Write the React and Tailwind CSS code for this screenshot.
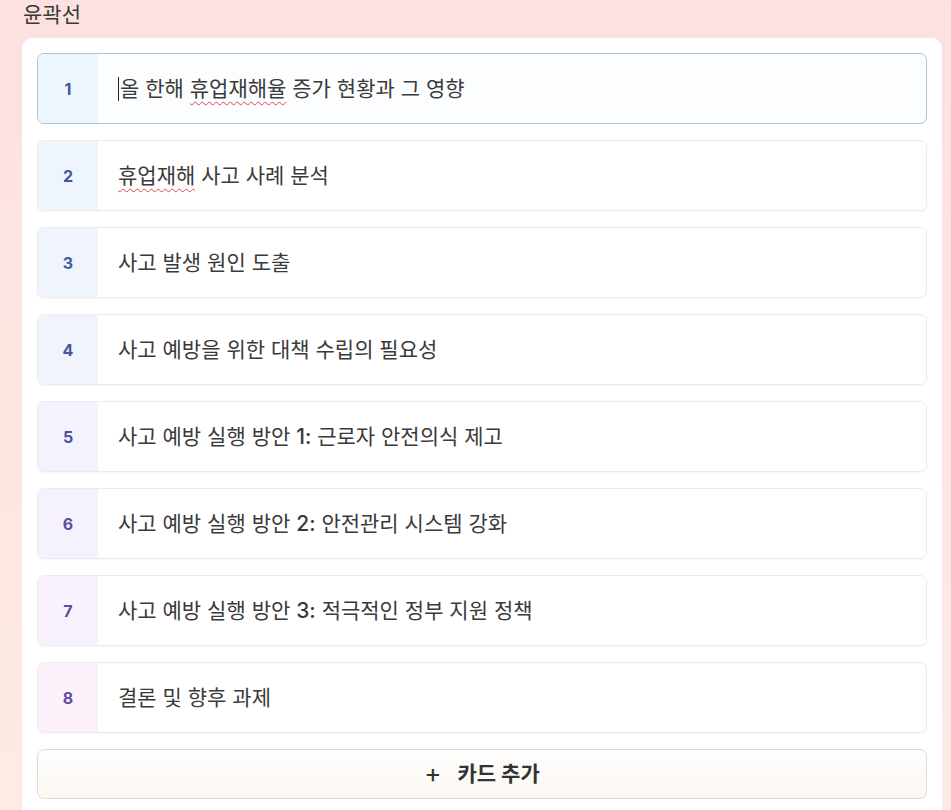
import React from "react";

const items = [
  { n: 1, numBg: "bg-[#edf6fd]", numColor: "text-[#3e5a9c]" },
  { n: 2, numBg: "bg-[#eef5fd]", numColor: "text-[#3f599c]" },
  { n: 3, numBg: "bg-[#f0f4fd]", numColor: "text-[#43589d]" },
  { n: 4, numBg: "bg-[#f1f3fd]", numColor: "text-[#47569e]" },
  { n: 5, numBg: "bg-[#f4f2fd]", numColor: "text-[#4d539f]" },
  { n: 6, numBg: "bg-[#f6f2fd]", numColor: "text-[#55509f]" },
  { n: 7, numBg: "bg-[#f9f2fc]", numColor: "text-[#5d4ea0]" },
  { n: 8, numBg: "bg-[#fcf1fb]", numColor: "text-[#654ca0]" },
];

const Wavy = ({ children }) => (
  <span className="underline decoration-wavy decoration-[#e0464b] decoration-1 underline-offset-[5px]">
    {children}
  </span>
);

const Num = ({ children }) => <span className="font-medium">{children}</span>;

const texts = [
  <>
    <span className="inline-block w-px h-[24px] bg-[#222] align-middle mr-px -mt-[2px]"></span>
    올 한해 <Wavy>휴업재해율</Wavy> 증가 현황과 그 영향
  </>,
  <>
    <Wavy>휴업재해</Wavy> 사고 사례 분석
  </>,
  <>사고 발생 원인 도출</>,
  <>사고 예방을 위한 대책 수립의 필요성</>,
  <>사고 예방 실행 방안 <Num>1:</Num> 근로자 안전의식 제고</>,
  <>사고 예방 실행 방안 <Num>2:</Num> 안전관리 시스템 강화</>,
  <>사고 예방 실행 방안 <Num>3:</Num> 적극적인 정부 지원 정책</>,
  <>결론 및 향후 과제</>,
];

export default function App() {
  return (
    <div
      className="w-[951px] h-[810px] overflow-hidden bg-gradient-to-b from-[#fde0e0] to-[#fdebe4] text-[#3a3a3a]"
      style={{ fontFamily: '"Inter", "Noto Sans CJK KR", "Noto Sans", sans-serif' }}
    >
      <div className="pl-[23px] pt-[2px] h-[38px] text-[21px] leading-[26px] text-[#3a3a3a]">
        윤곽선
      </div>
      <div className="ml-[22px] w-[920px] h-[800px] bg-white rounded-t-[10px] px-[15px] pt-[15px] flex flex-col gap-[16px]">
        {items.map((it, i) => (
          <div
            key={it.n}
            className={
              "flex h-[71px] rounded-[7px] border overflow-hidden " +
              (i === 0
                ? "border-[#a8c3d3] bg-[#fbfdff]"
                : "border-[#ececec] bg-white shadow-[0_1px_2px_rgba(0,0,0,0.04)]")
            }
          >
            <div
              className={
                "w-[60px] shrink-0 flex items-center justify-center text-[16px] font-bold " +
                it.numBg +
                " " +
                it.numColor
              }
            >
              {it.n}
            </div>
            <div className="flex-1 flex items-center pl-[20px] text-[21px] text-[#3a3a3a]">
              <span>{texts[i]}</span>
            </div>
          </div>
        ))}
        <div className="h-[50px] rounded-[7px] border border-[#dcdcdc] bg-gradient-to-b from-[#fefefe] to-[#fdf7f1] flex items-center justify-center gap-[16px] text-[21px] font-bold text-[#333]">
          <span className="text-[26px] font-normal leading-none -mt-[2px]">+</span>
          <span>카드 추가</span>
        </div>
      </div>
    </div>
  );
}
